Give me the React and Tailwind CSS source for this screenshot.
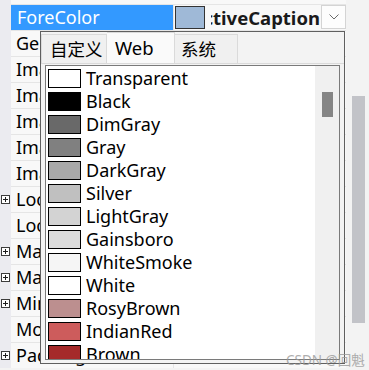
import React from "react";

const FONT = { fontFamily: '"Noto Sans", "Noto Sans CJK SC", sans-serif' };

const rows = [
  { name: "ForeColor", selected: true },
  { name: "GenerateMember" },
  { name: "Image" },
  { name: "ImageAlign" },
  { name: "ImageIndex" },
  { name: "ImageKey" },
  { name: "ImageList" },
  { name: "Location", plus: true },
  { name: "Locked" },
  { name: "Margin", plus: true },
  { name: "MaximumSize", plus: true },
  { name: "MinimumSize", plus: true },
  { name: "Modifiers" },
  { name: "Padding", plus: true },
];

const colors = [
  ["Transparent", "#ffffff"],
  ["Black", "#000000"],
  ["DimGray", "#696969"],
  ["Gray", "#808080"],
  ["DarkGray", "#a9a9a9"],
  ["Silver", "#c0c0c0"],
  ["LightGray", "#d3d3d3"],
  ["Gainsboro", "#dcdcdc"],
  ["WhiteSmoke", "#f5f5f5"],
  ["White", "#ffffff"],
  ["RosyBrown", "#bc8f8f"],
  ["IndianRed", "#cd5c5c"],
  ["Brown", "#a52a2a"],
];

const PlusBox = () => (
  <svg width="9" height="9" viewBox="0 0 9 9">
    <rect x="0.5" y="0.5" width="8" height="8" fill="#fff" stroke="#3c3c3c" />
    <path d="M2 4.5h5M4.5 2v5" stroke="#1e1e1e" />
  </svg>
);

const Chevron = () => (
  <svg width="10" height="6" viewBox="0 0 10 6">
    <path d="M0.5 0.5 5 5 9.5 0.5" fill="none" stroke="#6a6a6a" />
  </svg>
);

const GridRow = ({ row }) => (
  <div className="flex h-[26px] shrink-0">
    <div className="w-[11px] shrink-0 bg-[#ebebf0] flex items-center justify-center">
      {row.plus && <PlusBox />}
    </div>
    <div className="flex flex-1 min-w-0 border-t border-[#e5e5e5] bg-[#f8f8f8]">
      <div
        className={
          row.selected
            ? "w-[162px] shrink-0 pl-[6px] flex items-center bg-[#3399ff] text-white text-[18px] whitespace-nowrap overflow-hidden"
            : "w-[162px] shrink-0 pl-[5px] flex items-center text-black text-[18px] whitespace-nowrap overflow-hidden"
        }
      >
        {row.name}
      </div>
      <div className="w-px shrink-0 bg-[#e5e5e5]" />
      <div className="flex-1 min-w-0 flex">
        {row.selected && (
          <>
            <div className="ml-px mt-px shrink-0 w-[30px] h-[23px] bg-[#9fb9d7] border border-[#333]" />
            <div className="ml-[6px] flex-1 min-w-0 flex justify-end items-center overflow-hidden pr-[1px]">
              <span className="text-[18.5px] font-bold text-[#1a1a1a] whitespace-nowrap">
                ActiveCaption
              </span>
            </div>
            <div className="w-[25px] h-[24px] shrink-0 bg-[#fdfdfd] border border-[#d4d4d4] flex items-center justify-center">
              <Chevron />
            </div>
          </>
        )}
      </div>
    </div>
  </div>
);

const ColorPopup = () => (
  <div className="absolute left-[40px] top-[31px] w-[305px] h-[333px] border border-[#5f5f5f] bg-[#f3f3f3] flex flex-col">
    <div className="h-[31px] flex items-end shrink-0">
      <div className="w-[66px] h-[29px] pl-[8px] flex items-center bg-[#f0f0f0] border border-b-0 border-[#dadada] text-[17.5px] text-black">
        自定义
      </div>
      <div className="w-[68px] h-[31px] pl-[8px] flex items-center bg-[#fafafa] border-t border-r border-[#dadada] text-[18.5px] text-black">
        Web
      </div>
      <div className="w-[63px] h-[29px] pl-[6px] flex items-center bg-[#f0f0f0] border border-l-0 border-b-0 border-[#dadada] text-[17.5px] text-black">
        系统
      </div>
    </div>
    <div className="flex-1 flex border-t border-[#dadada] pt-px pl-[4px] pr-[4px] pb-[3px] min-h-0">
      <div className="flex-1 flex border border-[#7a7a7a] bg-white overflow-hidden">
        <div className="flex-1 flex flex-col pt-px">
          {colors.map(([name, hex]) => (
            <div key={name} className="h-[23px] shrink-0 flex items-center">
              <div
                className="ml-[2px] w-[33px] h-[19px] border border-black"
                style={{ backgroundColor: hex }}
              />
              <span className="ml-[5px] text-[18px] text-black whitespace-nowrap">{name}</span>
            </div>
          ))}
        </div>
        <div className="w-[24px] bg-[#f0f0f0] pt-[26px] pl-[7px]">
          <div className="w-[11px] h-[25px] bg-[#858585]" />
        </div>
      </div>
    </div>
  </div>
);

export default function App() {
  return (
    <div
      className="w-[369px] h-[370px] relative overflow-hidden bg-[#f3f3f3] flex"
      style={FONT}
    >
      <div className="w-[346px] shrink-0 flex flex-col">
        <div className="flex h-[4px] shrink-0">
          <div className="w-[11px] bg-[#ebebf0]" />
          <div className="flex-1 bg-[#f8f8f8]" />
        </div>
        {rows.map((row) => (
          <GridRow key={row.name} row={row} />
        ))}
      </div>
      <div className="flex-1 pt-[96px] pl-[6px]">
        <div className="w-[13px] h-[227px] bg-[#c2c3c8]" />
      </div>
      <ColorPopup />
      <div className="absolute left-[286px] top-[350px] text-[13.5px] text-[#9a9a9a] opacity-80 whitespace-nowrap">
        CSDN @回魁
      </div>
    </div>
  );
}
